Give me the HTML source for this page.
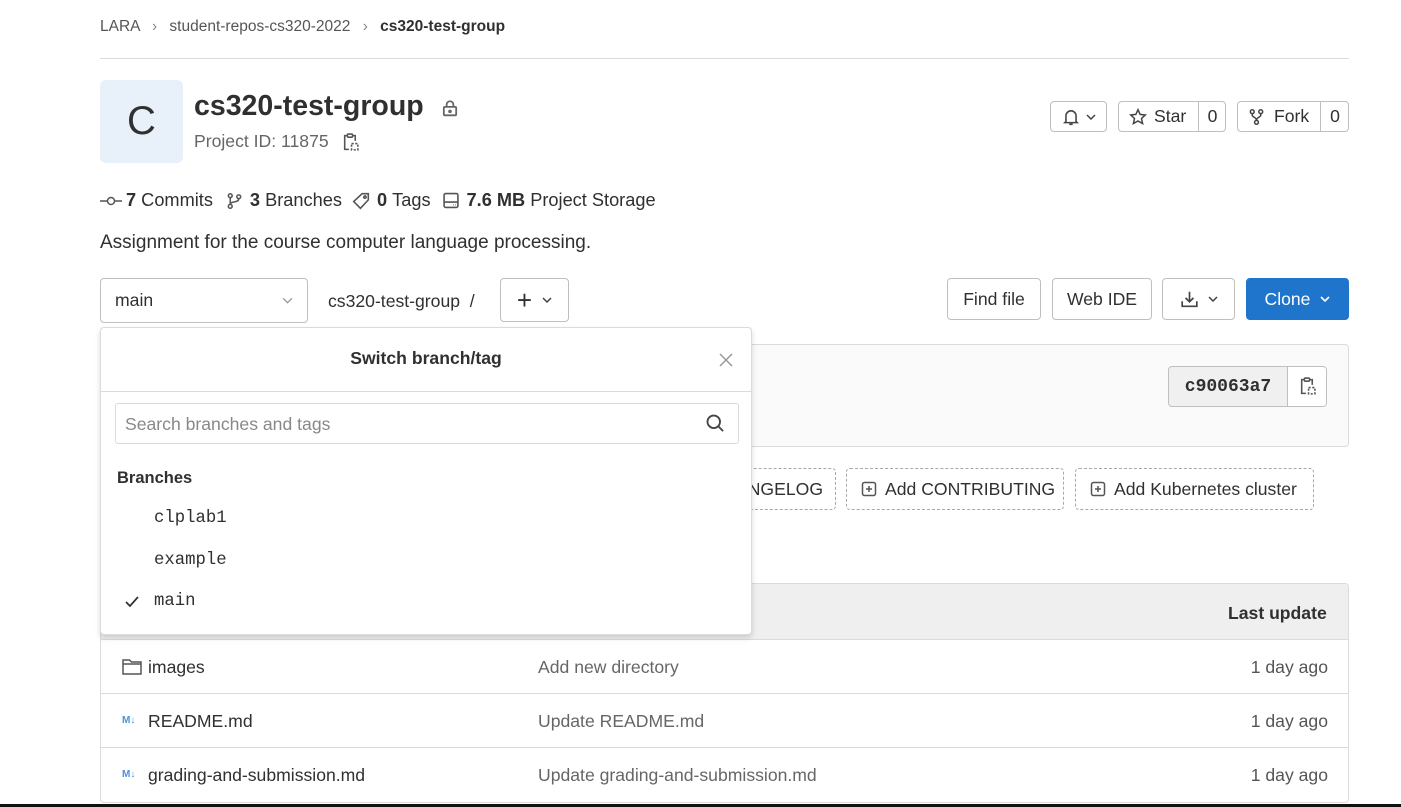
<!DOCTYPE html>
<html><head><meta charset="utf-8"><style>
*{box-sizing:border-box;margin:0;padding:0}
body{width:1401px;height:807px;background:#fff;font-family:"Liberation Sans",sans-serif;color:#303030;position:relative;overflow:hidden;font-size:17.6px}
.a{position:absolute}
.btn{position:absolute;border:1px solid #bfbfbf;border-radius:4px;background:#fff;display:flex;align-items:center;justify-content:center;font-size:17.6px;color:#303030}
svg{display:block}
.dash{position:absolute;border:1px dashed #a8a8a8;border-radius:4px;height:42px;top:468px;display:flex;align-items:center;font-size:17.6px;color:#303030}
.row{position:absolute;left:101px;width:1247px;height:55px;border-top:1px solid #dbdbdb;font-size:17.6px}
.row span{position:absolute;top:17px}
.mono{font-family:"Liberation Mono",monospace}
</style></head><body>
<div class="a" style="left:100px;top:18px;font-size:15.5px;color:#555">LARA <span style="margin:0 8px;color:#888">›</span> student-repos-cs320-2022 <span style="margin:0 8px;color:#888">›</span> <b style="color:#303030">cs320-test-group</b></div>
<div class="a" style="left:100px;top:58px;width:1249px;height:1px;background:#dbdbdb"></div>
<div class="a" style="left:100px;top:80px;width:83px;height:83px;background:#e8f1fa;border-radius:6px;font-size:40px;display:flex;align-items:center;justify-content:center;color:#303030">C</div>
<div class="a" style="left:194px;top:90px;font-size:28.5px;font-weight:bold;color:#303030">cs320-test-group</div>
<svg class="a" style="left:441px;top:99px" width="18" height="18" viewBox="0 0 16 16" fill="none" stroke="#666" stroke-width="1.6"><rect x="2.5" y="7" width="11" height="7.5" rx="1"/><path d="M5 7V5a3 3 0 0 1 6 0v2"/><circle cx="8" cy="11" r=".8" fill="#666"/></svg>
<div class="a" style="left:194px;top:131px;font-size:17.6px;color:#666">Project ID: 11875</div>
<svg class="a" style="left:342px;top:133px" width="17" height="19" viewBox="0 0 16 18" fill="none" stroke="#555" stroke-width="1.5"><rect x="5" y="1" width="5" height="3" rx="1"/><path d="M5 2.5H2.5v13h4M10 2.5h2.5v5"/><path d="M9 10h6v6H9z" stroke-dasharray="2 1.5"/></svg>
<div class="btn" style="left:1050px;top:101px;width:57px;height:31px"><svg width="18" height="18" viewBox="0 0 16 16" fill="none" stroke="#444" stroke-width="1.4"><path d="M3.5 12V7a4.5 4.5 0 0 1 9 0v5l1 1H2.5zM6.5 14.5h3"/></svg><svg style="margin-left:6px" width="10" height="6" viewBox="0 0 10 6" fill="none" stroke="#444" stroke-width="1.5"><path d="M1 1l4 4 4-4"/></svg></div>
<div class="btn" style="left:1118px;top:101px;width:108px;height:31px;justify-content:flex-start"><svg style="margin-left:10px" width="18" height="18" viewBox="0 0 16 16" fill="none" stroke="#444" stroke-width="1.3"><path d="M8 1.5l1.9 4.2 4.6.5-3.4 3.1 1 4.5L8 11.5l-4.1 2.3 1-4.5L1.5 6.2l4.6-.5z"/></svg><span style="margin-left:7px">Star</span><span style="position:absolute;left:79px;top:-1px;bottom:-1px;border-left:1px solid #bfbfbf;width:28px;display:flex;align-items:center;justify-content:center">0</span></div>
<div class="btn" style="left:1237px;top:101px;width:112px;height:31px;justify-content:flex-start"><svg style="margin-left:10px" width="17" height="18" viewBox="0 0 16 16" fill="none" stroke="#444" stroke-width="1.4"><circle cx="4" cy="3" r="1.8"/><circle cx="12" cy="3" r="1.8"/><circle cx="8" cy="13" r="1.8"/><path d="M4 5v1.5c0 1.5 4 2 4 4.5M12 5v1.5c0 1.5-4 2-4 4.5"/></svg><span style="margin-left:9px">Fork</span><span style="position:absolute;left:82px;top:-1px;bottom:-1px;border-left:1px solid #bfbfbf;width:29px;display:flex;align-items:center;justify-content:center">0</span></div>

<div class="a" style="left:100px;top:190px;display:flex;align-items:center;font-size:18.2px;white-space:nowrap">
<svg width="22" height="14" viewBox="0 0 22 14" fill="none" stroke="#555" stroke-width="1.5"><circle cx="11" cy="7" r="3.5"/><path d="M0 7h7.5M14.5 7H22"/></svg><b style="margin-left:4px">7</b>&nbsp;Commits
<svg style="margin-left:13px" width="17" height="18" viewBox="0 0 16 16" fill="none" stroke="#555" stroke-width="1.4"><circle cx="4" cy="3" r="1.8"/><circle cx="4" cy="13" r="1.8"/><circle cx="12" cy="4" r="1.8"/><path d="M4 5v6M12 6c0 4-8 2-8 5"/></svg><b style="margin-left:7px">3</b>&nbsp;Branches
<svg style="margin-left:10px" width="18" height="18" viewBox="0 0 16 16" fill="none" stroke="#555" stroke-width="1.4"><path d="M9 1.5h5.5V7l-7 7.5-6-6z"/><circle cx="11.5" cy="4.5" r="1"/></svg><b style="margin-left:7px">0</b>&nbsp;Tags
<svg style="margin-left:11px" width="18" height="17" viewBox="0 0 16 16" fill="none" stroke="#555" stroke-width="1.5"><rect x="1.5" y="1.5" width="13" height="13" rx="1.5"/><path d="M1.5 9.5h13M10 12h.5M12 12h.5"/></svg><b style="margin-left:7px">7.6 MB</b>&nbsp;Project Storage</div>
<div class="a" style="left:100px;top:232px;font-size:19px">Assignment for the course computer language processing.</div>

<div class="btn" style="left:100px;top:278px;width:208px;height:45px;justify-content:space-between;padding:0 14px"><span>main</span><svg width="11" height="7" viewBox="0 0 10 6" fill="none" stroke="#999" stroke-width="1.2"><path d="M1 1l4 4 4-4"/></svg></div>
<div class="a" style="left:328px;top:291px;font-size:17.6px">cs320-test-group&nbsp;&nbsp;/</div>
<div class="btn" style="left:500px;top:278px;width:69px;height:44px"><span style="font-size:26px;font-weight:300;line-height:1">+</span><svg style="margin-left:10px" width="10" height="6" viewBox="0 0 10 6" fill="none" stroke="#444" stroke-width="1.5"><path d="M1 1l4 4 4-4"/></svg></div>
<div class="btn" style="left:947px;top:278px;width:94px;height:42px">Find file</div>
<div class="btn" style="left:1052px;top:278px;width:100px;height:42px">Web IDE</div>
<div class="btn" style="left:1162px;top:278px;width:73px;height:42px"><svg width="19" height="18" viewBox="0 0 16 16" fill="none" stroke="#444" stroke-width="1.5"><path d="M8 1.5v9M4.5 7L8 10.5 11.5 7M1.5 10v4.5h13V10"/></svg><svg style="margin-left:9px" width="10" height="6" viewBox="0 0 10 6" fill="none" stroke="#444" stroke-width="1.5"><path d="M1 1l4 4 4-4"/></svg></div>
<div class="btn" style="left:1246px;top:278px;width:103px;height:42px;background:#1f75cb;border-color:#1f75cb;color:#fff">Clone<svg style="margin-left:10px" width="10" height="6" viewBox="0 0 10 6" fill="none" stroke="#fff" stroke-width="1.6"><path d="M1 1l4 4 4-4"/></svg></div>

<div class="a" style="left:100px;top:344px;width:1249px;height:103px;background:#fafafa;border:1px solid #dbdbdb;border-radius:4px"></div>
<div class="a" style="left:1168px;top:366px;width:159px;height:41px;border:1px solid #bfbfbf;border-radius:4px;background:#f0f0f0;display:flex;overflow:hidden"><span class="mono" style="width:118px;display:flex;align-items:center;justify-content:center;font-size:18px;font-weight:bold;color:#303030">c90063a7</span><span style="flex:1;background:#fff;border-left:1px solid #bfbfbf;display:flex;align-items:center;justify-content:center"><svg width="17" height="19" viewBox="0 0 16 18" fill="none" stroke="#555" stroke-width="1.5"><rect x="5" y="1" width="5" height="3" rx="1"/><path d="M5 2.5H2.5v13h4M10 2.5h2.5v5"/><path d="M9 10h6v6H9z" stroke-dasharray="2 1.5"/></svg></span></div>

<div class="dash" style="left:700px;width:136px;justify-content:flex-end;padding-right:12px">ANGELOG</div>
<div class="dash" style="left:846px;width:218px;padding-left:14px"><svg width="16" height="16" viewBox="0 0 16 16" fill="none" stroke="#555" stroke-width="1.5"><rect x="1.5" y="1.5" width="13" height="13" rx="2"/><path d="M8 5v6M5 8h6"/></svg><span style="margin-left:8px">Add CONTRIBUTING</span></div>
<div class="dash" style="left:1075px;width:239px;padding-left:14px"><svg width="16" height="16" viewBox="0 0 16 16" fill="none" stroke="#555" stroke-width="1.5"><rect x="1.5" y="1.5" width="13" height="13" rx="2"/><path d="M8 5v6M5 8h6"/></svg><span style="margin-left:8px">Add Kubernetes cluster</span></div>

<div class="a" style="left:100px;top:583px;width:1249px;height:220px;border:1px solid #dbdbdb;border-radius:4px"></div>
<div class="a" style="left:101px;top:584px;width:1247px;height:55px;background:#efefef;border-radius:4px 4px 0 0"></div>
<div class="a" style="left:1228px;top:603px;font-weight:bold;font-size:17.6px">Last update</div>
<div class="row" style="top:639px"><svg class="a" style="left:21px;top:18px" width="20" height="17" viewBox="0 0 20 17" fill="none" stroke="#555" stroke-width="1.5"><path d="M1 2h6.5l2 2H19v12H1z M1 6h18"/></svg><span style="left:47px">images</span><span style="left:437px;color:#666">Add new directory</span><span style="right:20px;color:#555">1 day ago</span></div>
<div class="row" style="top:693px"><span style="left:21px;font-size:10px;font-weight:bold;color:#4a90e2;top:21px">M↓</span><span style="left:47px">README.md</span><span style="left:437px;color:#666">Update README.md</span><span style="right:20px;color:#555">1 day ago</span></div>
<div class="row" style="top:747px"><span style="left:21px;font-size:10px;font-weight:bold;color:#4a90e2;top:21px">M↓</span><span style="left:47px">grading-and-submission.md</span><span style="left:437px;color:#666">Update grading-and-submission.md</span><span style="right:20px;color:#555">1 day ago</span></div>
<div class="a" style="left:0;top:804px;width:1401px;height:3px;background:#111"></div>

<div class="a" style="left:100px;top:327px;width:652px;height:308px;background:#fff;border:1px solid #dbdbdb;border-radius:4px;box-shadow:0 3px 6px rgba(0,0,0,.15)">
<div class="a" style="left:0;right:0;top:20px;text-align:center;font-weight:bold;font-size:17.6px">Switch branch/tag</div>
<svg class="a" style="left:617px;top:24px" width="16" height="16" viewBox="0 0 16 16" stroke="#999" stroke-width="1.5"><path d="M2 2l12 12M14 2L2 14"/></svg>
<div class="a" style="left:0;right:0;top:63px;height:1px;background:#dbdbdb"></div>
<div class="a" style="left:14px;top:75px;width:624px;height:41px;border:1px solid #dbdbdb;border-radius:3px;font-size:17.6px;color:#888;padding:10px 9px">Search branches and tags</div>
<svg class="a" style="left:604px;top:85px" width="20" height="20" viewBox="0 0 16 16" fill="none" stroke="#444" stroke-width="1.5"><circle cx="7" cy="7" r="5"/><path d="M10.5 10.5l4 4"/></svg>
<div class="a" style="left:16px;top:141px;font-weight:bold;font-size:16.5px">Branches</div>
<div class="a mono" style="left:53px;top:181px;font-size:17.3px">clplab1</div>
<div class="a mono" style="left:53px;top:223px;font-size:17.3px">example</div>
<svg class="a" style="left:24px;top:268px" width="14" height="12" viewBox="0 0 14 12" fill="none" stroke="#303030" stroke-width="1.7"><path d="M1 6l4 4 8-9"/></svg>
<div class="a mono" style="left:53px;top:264px;font-size:17.3px">main</div>
</div>
</body></html>
